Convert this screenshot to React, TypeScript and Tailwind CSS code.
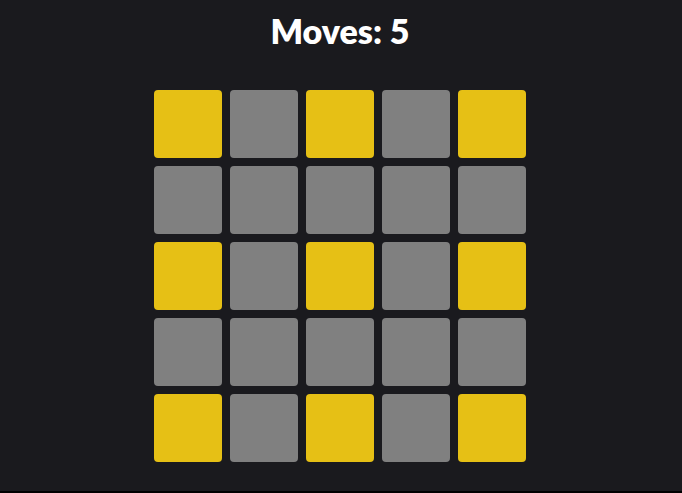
import React from "react";

const lit = (r: number, c: number) => r % 2 === 0 && c % 2 === 0;

export default function App() {
  return (
    <div className="h-[493px] w-full bg-black">
      <div
        className="flex h-[491px] flex-col items-center bg-[#1a1a1e] pr-[2px]"
        style={{ fontFamily: "Lato, 'Open Sans', sans-serif" }}
      >
        <h1 className="mt-[10px] text-[34px] font-extrabold leading-[42px] text-white">
          Moves: 5
        </h1>
        <div className="mt-[38px] grid grid-cols-5 gap-2">
          {Array.from({ length: 25 }, (_, i) => {
            const r = Math.floor(i / 5);
            const c = i % 5;
            return (
              <div
                key={i}
                className={`h-[68px] w-[68px] rounded ${
                  lit(r, c) ? "bg-[#e6c015]" : "bg-[#808080]"
                }`}
              />
            );
          })}
        </div>
      </div>
    </div>
  );
}
